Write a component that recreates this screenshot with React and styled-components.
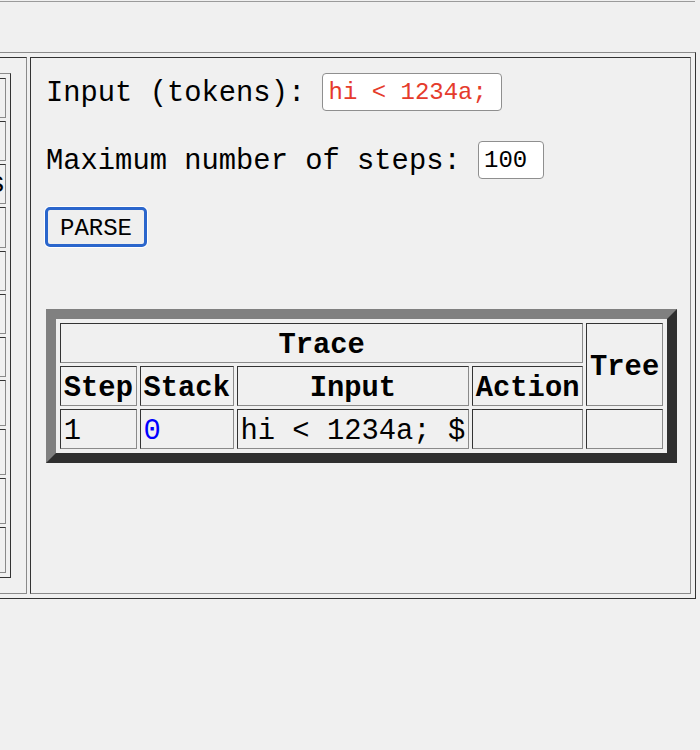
import styled, { createGlobalStyle, css } from 'styled-components';

const GlobalStyle = createGlobalStyle`
    html, body {
        margin: 0;
        background: #f0f0f0;
    }
    body {
        font-family: "Liberation Mono", "Courier New", monospace;
        color: #000;
    }
`;

const DARK = '#333';
const GRAY = '#8a8a8a';

const Viewport = styled.div`
    width: 700px;
    height: 750px;
    overflow: hidden;
`;

const TopRule = styled.div`
    margin-top: 1px;
    width: 695px;
    height: 1px;
    background: #9b9b9b;
`;

const Frame = styled.div`
    display: flex;
    gap: 3px;
    width: max-content;
    margin: 50px 0 0 -232px;
    padding: 4px;
    border: 1px solid;
    border-color: ${GRAY} ${DARK} ${DARK} ${GRAY};
`;

const LeftPane = styled.div`
    display: flex;
    align-items: center;
    padding: 15px;
    border: 1px solid;
    border-color: ${DARK} ${GRAY} ${GRAY} ${DARK};
`;

const RuleList = styled.div`
    display: flex;
    flex-direction: column;
    gap: 3px;
    padding: 4px;
    border: 1px solid;
    border-color: ${GRAY} ${DARK} ${DARK} ${GRAY};
`;

const RuleCell = styled.div`
    box-sizing: border-box;
    width: 212px;
    height: ${props => props.$h}px;
    display: flex;
    align-items: center;
    padding: 0 1px 0 3px;
    border: 1px solid;
    border-color: ${DARK} ${GRAY} ${GRAY} ${DARK};
    font-size: 28.8px;
    white-space: nowrap;
`;

const RightPane = styled.div`
    box-sizing: border-box;
    width: 661px;
    flex-shrink: 0;
    display: flex;
    flex-direction: column;
    align-items: flex-start;
    padding: 15px;
    border: 1px solid;
    border-color: ${DARK} ${GRAY} ${GRAY} ${DARK};
`;

const FieldRow = styled.div`
    display: flex;
    align-items: center;
    gap: 17.28px;
    height: 38px;
    margin-top: ${props => props.$top || 0}px;
`;

const Label = styled.span`
    padding-top: 2px;
    font-size: 28.8px;
    white-space: pre;
`;

const TextBox = styled.input`
    box-sizing: border-box;
    width: ${props => props.$w}px;
    height: 38px;
    padding: 0 5px;
    border: 1px solid #8f8f8f;
    border-radius: 4px;
    background: #fff;
    font-family: "Liberation Mono", "Courier New", monospace;
    font-size: 24px;
    color: ${props => props.$color || '#000'};
    outline: none;
`;

const ParseButton = styled.button`
    box-sizing: border-box;
    width: 102px;
    height: 40px;
    margin: 28px 0 0 -1px;
    padding: 2px 0 0;
    border: 3px solid #2b66cc;
    border-radius: 5px;
    background: #efefef;
    box-shadow: 0 0 0 1px #fff;
    font-family: "Liberation Mono", "Courier New", monospace;
    font-size: 24px;
    color: #000;
`;

const TraceTable = styled.table`
    margin-top: 62px;
    border-collapse: separate;
    border-spacing: 3px;
    padding: 1px;
    border: 10px solid;
    border-color: #808080 #2f2f2f #2f2f2f #808080;
`;

const cellCss = css`
    border: 1px solid;
    border-color: ${DARK} ${GRAY} ${GRAY} ${DARK};
    padding: 7px 2.8px 1px;
    font-family: "Liberation Mono", "Courier New", monospace;
    font-size: 28.8px;
    line-height: 30px;
    white-space: pre;
`;

const Head = styled.th`
    ${cellCss}
    font-weight: bold;
    text-align: center;
`;

const Cell = styled.td`
    ${cellCss}
    text-align: left;
    color: ${props => props.$color || '#000'};
`;

// only the tail of the third label shows past the left edge
const rules = [
    ['', 40],
    ['', 40],
    ['Nonterminals', 40],
    ['', 41],
    ['', 40],
    ['', 40],
    ['', 40],
    ['', 46],
    ['', 46],
    ['', 46],
    ['', 46],
];

export default function App() {
    return (
        <Viewport>
            <GlobalStyle />
            <TopRule />
            <Frame>
                <LeftPane>
                    <RuleList>
                        {rules.map(([text, h], i) => (
                            <RuleCell key={i} $h={h}>{text}</RuleCell>
                        ))}
                    </RuleList>
                </LeftPane>
                <RightPane>
                    <FieldRow>
                        <Label>Input (tokens):</Label>
                        <TextBox $w={180} $color="#e53b2c" defaultValue="hi < 1234a;" />
                    </FieldRow>
                    <FieldRow $top={30}>
                        <Label>Maximum number of steps:</Label>
                        <TextBox $w={66} defaultValue="100" />
                    </FieldRow>
                    <ParseButton>PARSE</ParseButton>
                    <TraceTable>
                        <tbody>
                            <tr>
                                <Head colSpan={4}>Trace</Head>
                                <Head rowSpan={2}>Tree</Head>
                            </tr>
                            <tr>
                                <Head>Step</Head>
                                <Head>Stack</Head>
                                <Head>Input</Head>
                                <Head>Action</Head>
                            </tr>
                            <tr>
                                <Cell>1</Cell>
                                <Cell $color="#0000ff">0</Cell>
                                <Cell>{'hi < 1234a; $'}</Cell>
                                <Cell />
                                <Cell />
                            </tr>
                        </tbody>
                    </TraceTable>
                </RightPane>
            </Frame>
        </Viewport>
    );
}
